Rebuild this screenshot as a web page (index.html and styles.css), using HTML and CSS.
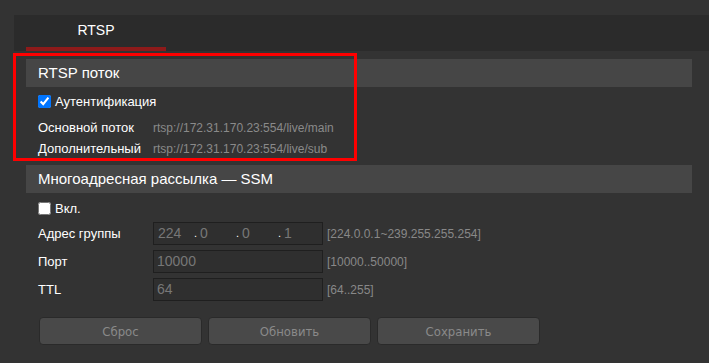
FILE: index.html
```html
<!DOCTYPE html>
<html lang="ru">
<head>
  <meta charset="UTF-8">
  <title>RTSP</title>
  <link rel="stylesheet" href="styles.css">
</head>
<body>
<div class="tabs">
  <div class="tab active">RTSP</div>
</div>

<div class="content">
  <div class="section">
    <div class="section-title">RTSP поток</div>
    <label class="check-row"><input type="checkbox" checked> Аутентификация</label>
    <div class="row">
      <span class="label">Основной поток</span>
      <span class="value">rtsp://172.31.170.23:554/live/main</span>
    </div>
    <div class="row">
      <span class="label">Дополнительный</span>
      <span class="value">rtsp://172.31.170.23:554/live/sub</span>
    </div>
  </div>

  <div class="section">
    <div class="section-title">Многоадресная рассылка — SSM</div>
    <label class="check-row ssm"><input type="checkbox"> Вкл.</label>
    <div class="field">
      <span class="label">Адрес группы</span>
      <div class="input ip">
        <span class="octet">224</span><span class="dot">.</span>
        <span class="octet">0</span><span class="dot">.</span>
        <span class="octet">0</span><span class="dot">.</span>
        <span class="octet">1</span>
      </div>
      <span class="hint">[224.0.0.1~239.255.255.254]</span>
    </div>
    <div class="field">
      <span class="label">Порт</span>
      <div class="input">10000</div>
      <span class="hint">[10000..50000]</span>
    </div>
    <div class="field">
      <span class="label">TTL</span>
      <div class="input">64</div>
      <span class="hint">[64..255]</span>
    </div>
  </div>

  <div class="buttons">
    <button>Сброс</button>
    <button>Обновить</button>
    <button>Сохранить</button>
  </div>
</div>

<div class="highlight"></div>
</body>
</html>
```

FILE: styles.css
```css
body {
  margin: 0;
  background: #333;
  font-family: 'Liberation Sans', Arial, sans-serif;
  color: #fff;
}
.tabs {
  display: flex;
  margin: 15px 0 0 14px;
  padding-left: 12px;
  height: 36px;
  background: #2b2b2b;
}
.tab {
  width: 140px;
  box-sizing: border-box;
  height: 36px;
  line-height: 30px;
  padding-bottom: 2px;
  text-align: center;
  font-size: 14px;
}
.tab.active {
  border-bottom: 4px solid #8e1a1a;
}

.content {
  width: 666px;
  margin-left: 26px;
}
.section-title {
  margin-top: 8px;
  height: 28px;
  line-height: 28px;
  padding-left: 12px;
  background: #464646;
  font-size: 15px;
}
.section + .section .section-title {
  margin-top: 6px;
}
.check-row {
  display: flex;
  align-items: center;
  height: 22px;
  margin: 3px 0 0 12px;
  font-size: 13px;
}
.check-row.ssm {
  margin-top: 4px;
}
.check-row input {
  width: 13px;
  height: 13px;
  margin: 0 4px 0 0;
}
.row {
  display: flex;
  align-items: center;
  height: 21px;
  padding-left: 12px;
  font-size: 13px;
}
.check-row + .row {
  margin-top: 5px;
}
.label {
  width: 115px;
  flex: none;
}
.value {
  color: #8a8a8a;
  font-size: 12px;
}
.field {
  display: flex;
  align-items: center;
  height: 23px;
  margin-top: 5px;
  padding-left: 12px;
  font-size: 13px;
}
.check-row + .field {
  margin-top: 3px;
}
.input {
  width: 170px;
  height: 23px;
  box-sizing: border-box;
  border: 1px solid #1f1f1f;
  background: #2f2f2f;
  color: #777;
  font-size: 14px;
  line-height: 21px;
  padding-left: 3px;
}
.input.ip {
  display: flex;
}
.octet {
  width: 36px;
  padding-left: 1px;
}
.dot {
  width: 5px;
  color: #fff;
  font-size: 11px;
}
.hint {
  margin-left: 4px;
  color: #888;
  font-size: 12px;
}

.buttons {
  display: flex;
  gap: 6px;
  margin: 16px 0 0 13px;
}
.buttons button {
  width: 163px;
  height: 28px;
  border: 1px solid #2a2a2a;
  border-radius: 4px;
  background: #494949;
  color: #8a8a8a;
  font-family: 'DejaVu Sans Condensed', 'Roboto', sans-serif;
  font-size: 13px;
}

.highlight {
  position: absolute;
  left: 13px;
  top: 53px;
  width: 338px;
  height: 102px;
  border: 3px solid #ff0000;
}
```
